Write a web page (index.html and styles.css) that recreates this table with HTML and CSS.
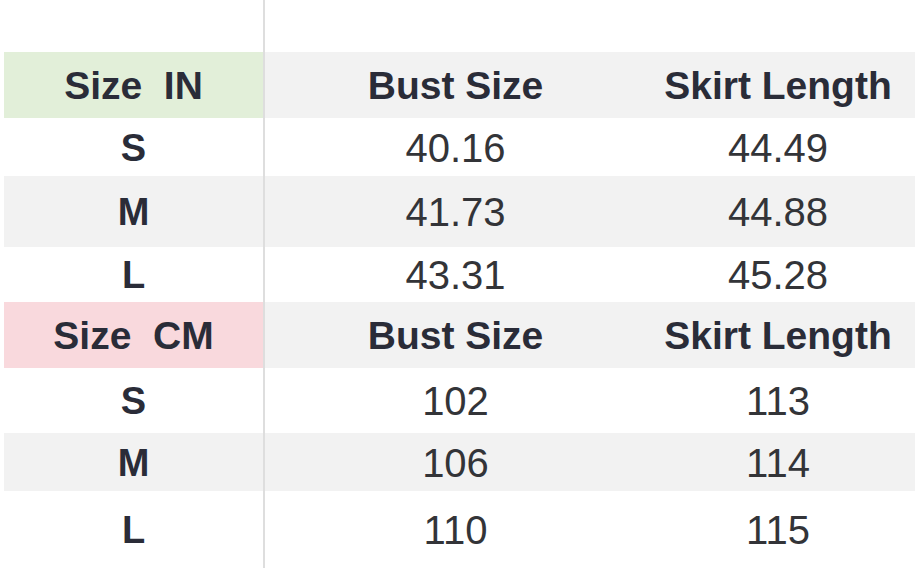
FILE: index.html
```html
<!DOCTYPE html>
<html>
<head>
<meta charset="utf-8">
<link rel="stylesheet" href="styles.css">
</head>
<body>
<div class="chart">
  <div class="cell first"></div><div class="cell"></div><div class="cell last"></div>

  <div class="cell first head green">Size&nbsp;&nbsp;IN</div>
  <div class="cell head gray">Bust Size</div>
  <div class="cell last head gray">Skirt Length</div>

  <div class="cell first size">S</div>
  <div class="cell num">40.16</div>
  <div class="cell last num">44.49</div>

  <div class="cell first size gray">M</div>
  <div class="cell num gray">41.73</div>
  <div class="cell last num gray">44.88</div>

  <div class="cell first size">L</div>
  <div class="cell num">43.31</div>
  <div class="cell last num">45.28</div>

  <div class="cell first head pink">Size&nbsp;&nbsp;CM</div>
  <div class="cell head gray">Bust Size</div>
  <div class="cell last head gray">Skirt Length</div>

  <div class="cell first size">S</div>
  <div class="cell num">102</div>
  <div class="cell last num">113</div>

  <div class="cell first size gray">M</div>
  <div class="cell num gray">106</div>
  <div class="cell last num gray">114</div>

  <div class="cell first size">L</div>
  <div class="cell num">110</div>
  <div class="cell last num">115</div>
</div>
</body>
</html>
```

FILE: styles.css
```css
html, body {
  margin: 0;
  padding: 0;
  background: #ffffff;
}

.chart {
  width: 915px;
  height: 568px;
  display: grid;
  grid-template-columns: 4px 261px 381px 1fr;
  grid-template-rows: 52px 66px 58px 71px 55px 66px 65px 58px 77px;
  font-family: "Liberation Sans", Arial, sans-serif;
  overflow: hidden;
}

.cell {
  display: flex;
  align-items: center;
  justify-content: center;
  white-space: nowrap;
  padding-top: 2px;
}

.first {
  grid-column: 2;
  border-right: 2px solid #dedede;
}

.last {
  padding-right: 5px;
}

.head {
  font-weight: bold;
  font-size: 39px;
  color: #2a2c38;
}

.size {
  font-weight: bold;
  font-size: 38px;
  color: #2a2c38;
}

.num {
  font-size: 40px;
  color: #333438;
}

.gray {
  background: #f2f2f2;
}

.green {
  background: #e2efd9;
}

.pink {
  background: #f9d9dd;
}
```
